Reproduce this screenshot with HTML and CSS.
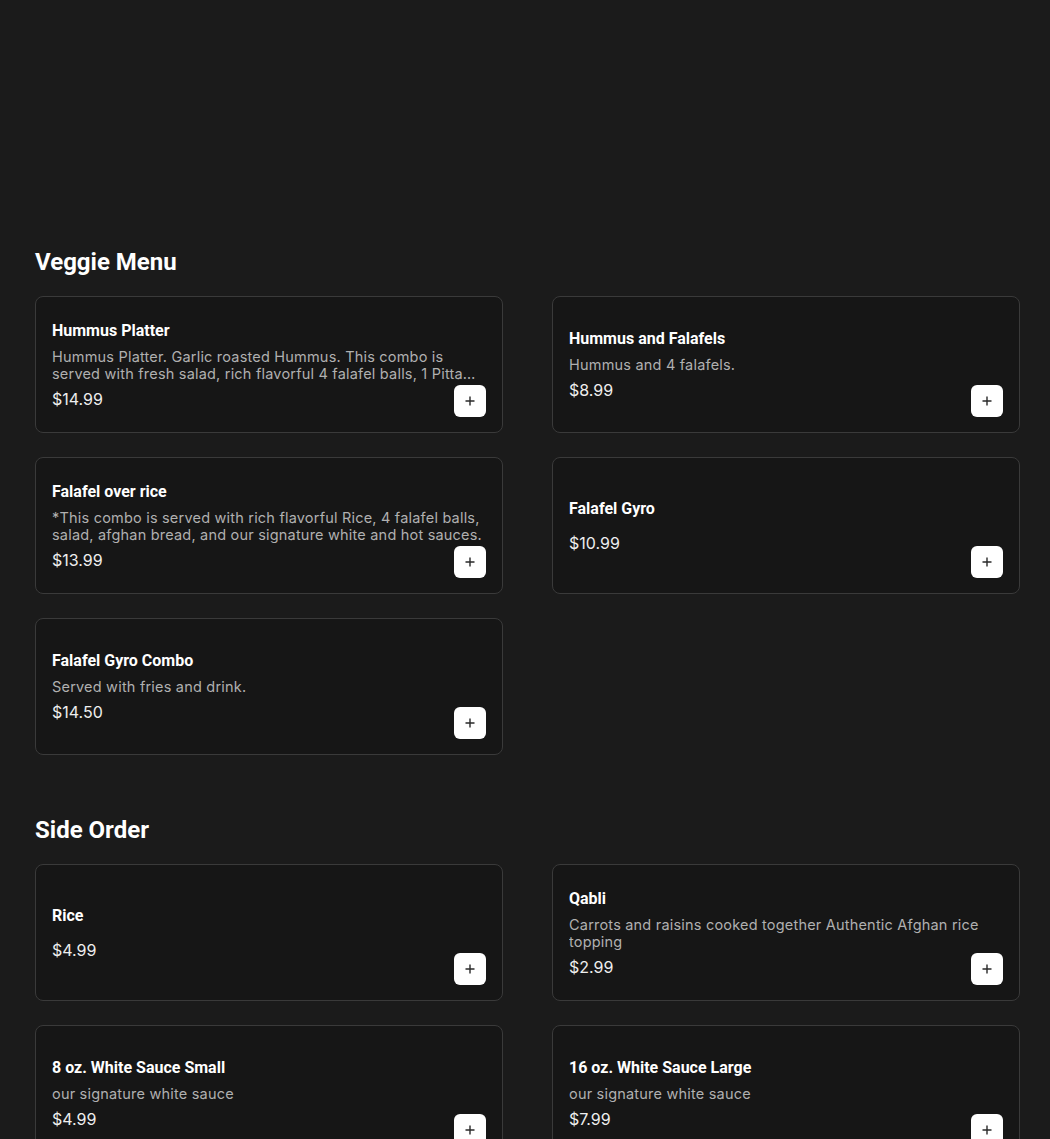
FILE: index.html
```html
<!DOCTYPE html>
<html lang="en">
<head>
<meta charset="utf-8">
<title>Menu</title>
<link rel="stylesheet" href="styles.css">
</head>
<body>
<main class="page">
  <div class="hero"></div>

  <section class="section">
    <h2 class="section-title">Veggie Menu</h2>
    <div class="grid">
      <div class="card">
        <div class="info">
          <div class="name">Hummus Platter</div>
          <div class="desc">Hummus Platter. Garlic roasted Hummus. This combo is served with fresh salad, rich flavorful 4 falafel balls, 1 Pitta bread, and our signature white and hot sauces.</div>
          <div class="price">$14.99</div>
        </div>
        <button class="add" aria-label="Add"><svg viewBox="0 0 12 12" width="12" height="12"><path d="M6 1.5v9M1.5 6h9" stroke="#2a2a2a" stroke-width="1.4" fill="none"/></svg></button>
      </div>
      <div class="card">
        <div class="info">
          <div class="name">Hummus and Falafels</div>
          <div class="desc">Hummus and 4 falafels.</div>
          <div class="price">$8.99</div>
        </div>
        <button class="add" aria-label="Add"><svg viewBox="0 0 12 12" width="12" height="12"><path d="M6 1.5v9M1.5 6h9" stroke="#2a2a2a" stroke-width="1.4" fill="none"/></svg></button>
      </div>
      <div class="card">
        <div class="info">
          <div class="name">Falafel over rice</div>
          <div class="desc">*This combo is served with rich flavorful Rice, 4 falafel balls, salad, afghan bread, and our signature white and hot sauces.</div>
          <div class="price">$13.99</div>
        </div>
        <button class="add" aria-label="Add"><svg viewBox="0 0 12 12" width="12" height="12"><path d="M6 1.5v9M1.5 6h9" stroke="#2a2a2a" stroke-width="1.4" fill="none"/></svg></button>
      </div>
      <div class="card">
        <div class="info">
          <div class="name">Falafel Gyro</div>
          <div class="desc"></div>
          <div class="price">$10.99</div>
        </div>
        <button class="add" aria-label="Add"><svg viewBox="0 0 12 12" width="12" height="12"><path d="M6 1.5v9M1.5 6h9" stroke="#2a2a2a" stroke-width="1.4" fill="none"/></svg></button>
      </div>
      <div class="card">
        <div class="info">
          <div class="name">Falafel Gyro Combo</div>
          <div class="desc">Served with fries and drink.</div>
          <div class="price">$14.50</div>
        </div>
        <button class="add" aria-label="Add"><svg viewBox="0 0 12 12" width="12" height="12"><path d="M6 1.5v9M1.5 6h9" stroke="#2a2a2a" stroke-width="1.4" fill="none"/></svg></button>
      </div>
    </div>
  </section>

  <section class="section">
    <h2 class="section-title">Side Order</h2>
    <div class="grid">
      <div class="card">
        <div class="info">
          <div class="name">Rice</div>
          <div class="desc"></div>
          <div class="price">$4.99</div>
        </div>
        <button class="add" aria-label="Add"><svg viewBox="0 0 12 12" width="12" height="12"><path d="M6 1.5v9M1.5 6h9" stroke="#2a2a2a" stroke-width="1.4" fill="none"/></svg></button>
      </div>
      <div class="card">
        <div class="info">
          <div class="name">Qabli</div>
          <div class="desc">Carrots and raisins cooked together Authentic Afghan rice topping</div>
          <div class="price">$2.99</div>
        </div>
        <button class="add" aria-label="Add"><svg viewBox="0 0 12 12" width="12" height="12"><path d="M6 1.5v9M1.5 6h9" stroke="#2a2a2a" stroke-width="1.4" fill="none"/></svg></button>
      </div>
      <div class="card">
        <div class="info">
          <div class="name">8 oz. White Sauce Small</div>
          <div class="desc">our signature white sauce</div>
          <div class="price">$4.99</div>
        </div>
        <button class="add" aria-label="Add"><svg viewBox="0 0 12 12" width="12" height="12"><path d="M6 1.5v9M1.5 6h9" stroke="#2a2a2a" stroke-width="1.4" fill="none"/></svg></button>
      </div>
      <div class="card">
        <div class="info">
          <div class="name">16 oz. White Sauce Large</div>
          <div class="desc">our signature white sauce</div>
          <div class="price">$7.99</div>
        </div>
        <button class="add" aria-label="Add"><svg viewBox="0 0 12 12" width="12" height="12"><path d="M6 1.5v9M1.5 6h9" stroke="#2a2a2a" stroke-width="1.4" fill="none"/></svg></button>
      </div>
    </div>
  </section>
</main>
</body>
</html>
```

FILE: styles.css
```css
* { box-sizing: border-box; }

html, body {
  margin: 0;
  padding: 0;
  background: #1b1b1b;
}

body {
  font-family: Roboto, "Liberation Sans", Arial, sans-serif;
  color: #ffffff;
}

.page {
  padding: 0 30px 0 35px;
}

.hero {
  height: 248px;
}

.section + .section {
  margin-top: 61px;
}

.section-title {
  margin: 0 0 20px 0;
  font-family: Roboto, "Liberation Sans", sans-serif;
  font-weight: 700;
  font-size: 24px;
  line-height: 28px;
  color: #ffffff;
}

.grid {
  display: grid;
  grid-template-columns: 468px 468px;
  column-gap: 49px;
  row-gap: 24px;
}

.card {
  position: relative;
  height: 137px;
  border: 1px solid #3a3a3a;
  border-radius: 8px;
  background: #161616;
  padding: 16px;
  display: flex;
  align-items: center;
}

.info {
  width: 100%;
  display: flex;
  flex-direction: column;
  gap: 7px;
}

.name {
  font-family: Roboto, "Liberation Sans", sans-serif;
  font-weight: 700;
  font-size: 16px;
  line-height: 20px;
  color: #ffffff;
}

.desc {
  font-family: Inter, "Open Sans", sans-serif;
  font-size: 14.5px;
  letter-spacing: 0.2px;
  line-height: 17px;
  color: #b0b0b0;
  display: -webkit-box;
  -webkit-line-clamp: 2;
  -webkit-box-orient: vertical;
  overflow: hidden;
}

.price {
  font-family: Inter, "Open Sans", sans-serif;
  font-size: 16px;
  line-height: 20px;
  color: #eeeeee;
}

.add {
  position: absolute;
  right: 16px;
  bottom: 15px;
  width: 32px;
  height: 32px;
  border: none;
  border-radius: 6px;
  background: #ffffff;
  padding: 0;
  display: flex;
  align-items: center;
  justify-content: center;
  cursor: pointer;
}

.add svg {
  display: block;
}
```
